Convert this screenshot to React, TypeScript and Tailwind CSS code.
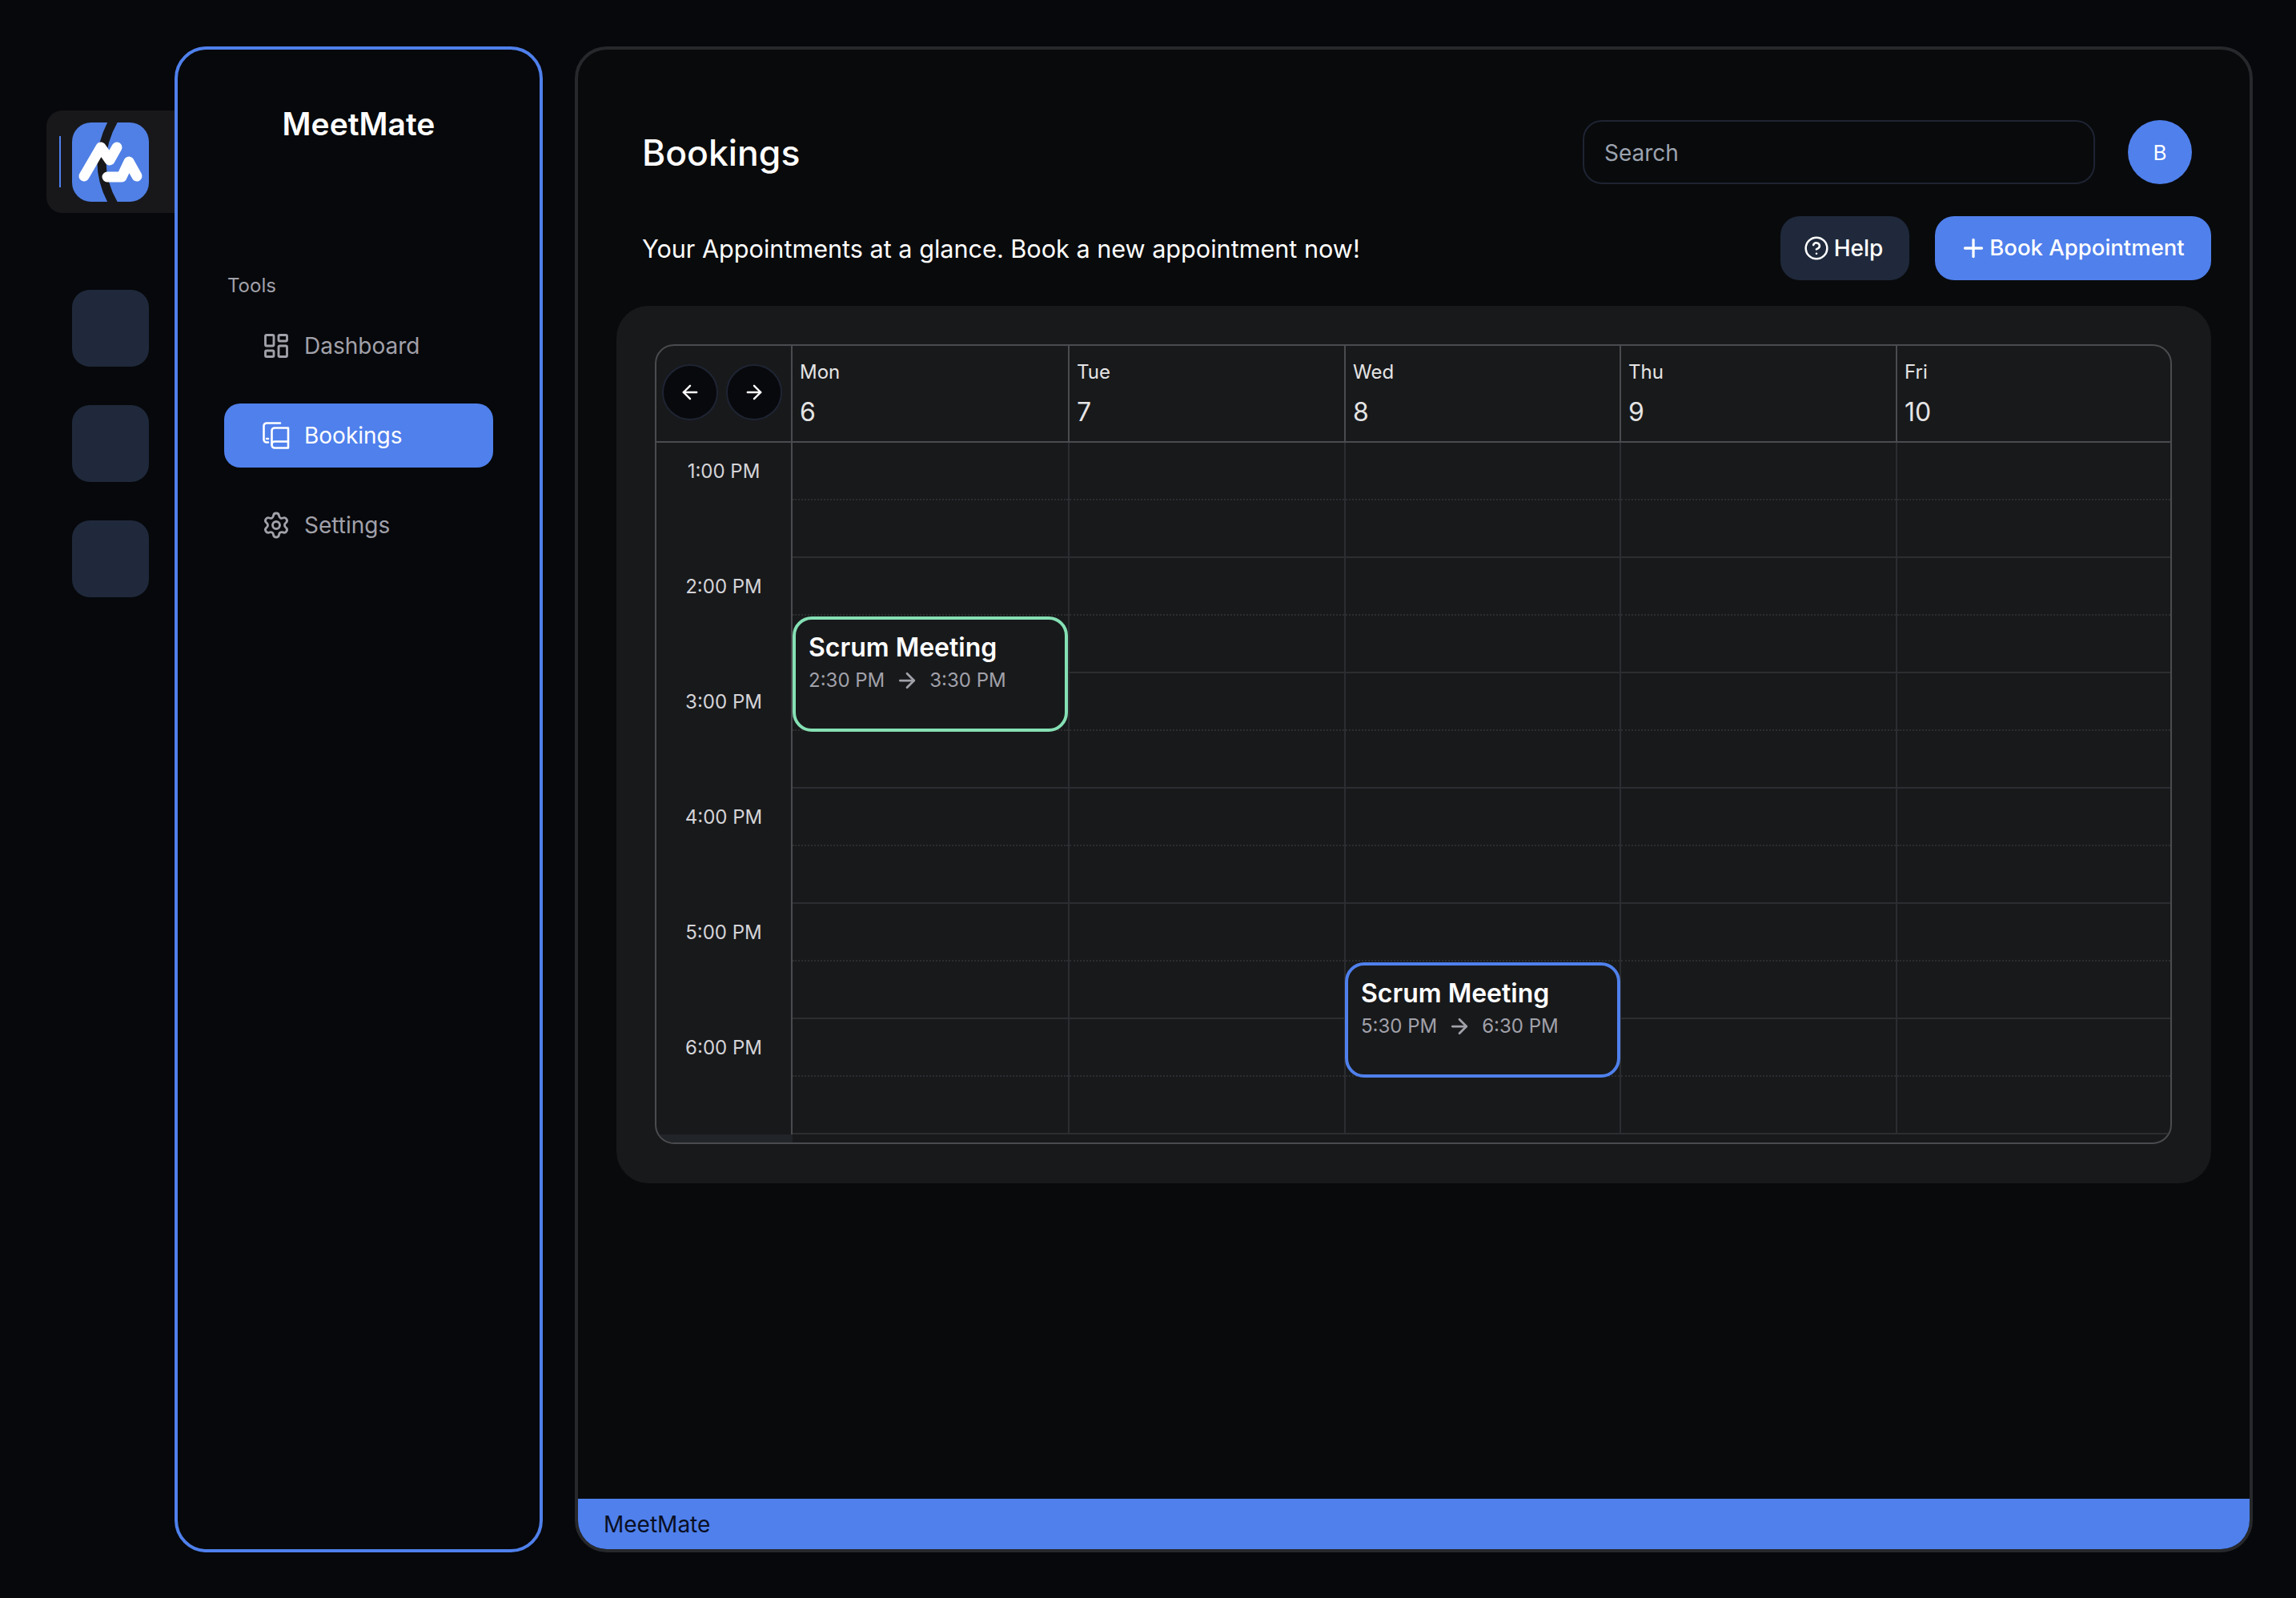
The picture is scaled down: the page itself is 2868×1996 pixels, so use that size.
import { ArrowLeft, ArrowRight, CircleHelp, LayoutDashboard, Plus, Settings } from "lucide-react";

const days = [
  ["Mon", "6", "w-[346px]"],
  ["Tue", "7", "w-[345px]"],
  ["Wed", "8", "w-[344px]"],
  ["Thu", "9", "w-[345px]"],
  ["Fri", "10", "w-[343px]"],
];
const times = ["1:00 PM", "2:00 PM", "3:00 PM", "4:00 PM", "5:00 PM", "6:00 PM"];

function Logo() {
  return (
    <svg viewBox="0 0 96 99" className="w-[96px] h-[99px] block">
      <rect width="96" height="99" rx="24" fill="#5080e6" />
      <path d="M52 -3 Q22 50 52 102" stroke="#18181b" strokeWidth="11" fill="none" />
      <path d="M15 67 L36 31 L47 47 L56 31" stroke="#fff" strokeWidth="13" fill="none" strokeLinecap="round" strokeLinejoin="round" />
      <path d="M44 68 L62 68 L71 49 L81 67" stroke="#fff" strokeWidth="13" fill="none" strokeLinecap="round" strokeLinejoin="round" />
    </svg>
  );
}

function BooksIcon() {
  return (
    <svg viewBox="0 0 34 34" className="w-[34px] h-[34px] shrink-0" fill="none" stroke="#fff" strokeWidth="2.6" strokeLinecap="round" strokeLinejoin="round">
      <path d="M22 1.500H5A3.500 3.500 0 0 0 1.500 5V22A3.500 3.500 0 0 0 5 25.500H7" />
      <path d="M5 21H7" />
      <path d="M15 7.500H32V32.500H15A3.500 3.500 0 0 1 11.500 29V11A3.500 3.500 0 0 1 15 7.500Z" />
      <path d="M11.500 28A3.500 3.500 0 0 1 15 24.500H32" />
    </svg>
  );
}

function NavItem({ icon, label, active }: { icon: React.ReactNode; label: string; active?: boolean }) {
  return (
    <div className={`flex items-center h-[80px] w-[336px] rounded-[20px] pl-[48px] gap-[18px] text-[28px] ${active ? "bg-[#4f80ec] text-white" : "text-[#a1a1aa]"}`}>
      <span className="w-[34px] flex justify-center">{icon}</span>
      <span>{label}</span>
    </div>
  );
}

function EventCard({ border, left, from, to }: { border: string; left: string; from: string; to: string }) {
  return (
    <div className={`absolute top-[1px] w-[344px] h-[144px] rounded-[24px] border-4 bg-[#18191b] pl-[16px] pt-[16px] z-10 ${left} ${border}`}>
      <div className="text-[32px] leading-[38px] font-semibold text-white">Scrum Meeting</div>
      <div className="flex items-center text-[24px] leading-[32px] mt-[6px] text-[#a1a1aa]">
        <span>{from}</span>
        <ArrowRight size={30} strokeWidth={2.2} className="mx-[13px] shrink-0" />
        <span>{to}</span>
      </div>
    </div>
  );
}

export default function App() {
  return (
    <div className="w-[2868px] h-[1996px] bg-[#07080b] flex pt-[58px] pb-[57px] font-['Inter',sans-serif] overflow-hidden">
      <div className="w-[218px] pl-[58px] pt-[80px] shrink-0 flex flex-col">
        <div className="h-[128px] w-[160px] bg-[#18181b] rounded-l-[20px] flex items-center pl-[16px]">
          <div className="w-[2px] h-[64px] bg-[#4f80ec] mr-[14px]"></div>
          <Logo />
        </div>
        <div className="ml-[32px] mt-[96px] flex flex-col gap-[48px]">
          <div className="w-[96px] h-[96px] rounded-[22px] bg-[#1f293b]"></div>
          <div className="w-[96px] h-[96px] rounded-[22px] bg-[#1f293b]"></div>
          <div className="w-[96px] h-[96px] rounded-[22px] bg-[#1f293b]"></div>
        </div>
      </div>

      <aside className="w-[460px] shrink-0 border-4 border-[#4f80ec] rounded-[40px] bg-[#07080b] flex flex-col items-center">
        <h1 className="text-[39px] leading-[48px] font-semibold text-white mt-[69px]">MeetMate</h1>
        <div className="w-[336px] mt-[162px]">
          <div className="text-[24px] leading-[32px] text-[#a1a1aa] pl-[4px]">Tools</div>
          <div className="flex flex-col gap-[32px] mt-[19px]">
            <NavItem icon={<LayoutDashboard size={36} strokeWidth={1.9} className="shrink-0" />} label="Dashboard" />
            <NavItem icon={<BooksIcon />} label="Bookings" active />
            <NavItem icon={<Settings size={36} strokeWidth={1.9} className="shrink-0" />} label="Settings" />
          </div>
        </div>
      </aside>

      <main className="ml-[40px] w-[2096px] shrink-0 border-4 border-[#27282b] rounded-[40px] bg-[#090a0c] flex flex-col overflow-hidden">
        <div className="flex items-center h-[80px] mt-[88px] pl-[80px]">
          <h2 className="text-[44.500px] leading-[56px] font-medium text-white flex-1 pt-[2px]">Bookings</h2>
          <div className="w-[640px] h-[80px] rounded-[24px] border-2 border-[#1e2433] flex items-center pl-[25px] pt-[1px] text-[28px] text-[#9ca3af]">Search</div>
          <div className="w-[80px] h-[80px] rounded-full bg-[#4f80ec] text-white text-[26px] flex items-center justify-center ml-[41px] mr-[72px]">B</div>
        </div>
        <div className="flex items-center h-[80px] mt-[40px] pl-[80px]">
          <p className="text-[30.600px] text-white flex-1 pt-[2px]">Your Appointments at a glance. Book a new appointment now!</p>
          <button className="w-[161px] h-[80px] rounded-[24px] bg-[#1f293b] text-white text-[28px] font-medium flex items-center justify-center gap-[6px] pr-[4px]">
            <CircleHelp size={32} strokeWidth={1.9} className="shrink-0" />Help
          </button>
          <button className="w-[345px] h-[80px] rounded-[24px] bg-[#4f80ec] text-white text-[27.500px] font-medium flex items-center justify-center gap-[2px] pr-[3px] ml-[32px] mr-[48px]">
            <Plus size={36} strokeWidth={2.2} className="shrink-0" />Book Appointment
          </button>
        </div>
        <section className="ml-[48px] mt-[32px] w-[1992px] h-[1096px] rounded-[40px] bg-[#18191b] pt-[48px] pl-[48px]">
          <div className="w-[1895px] h-[999px] rounded-[24px] border-2 border-[#4a4b4e] overflow-hidden">
            <div className="flex h-[121px] border-b-2 border-[#4a4b4e]">
              <div className="w-[168px] shrink-0 flex items-center pl-[7px] gap-[10px] pb-[3px]">
                <div className="w-[70px] h-[70px] rounded-full bg-[#08090c] border-2 border-[#1e2433] flex items-center justify-center text-white"><ArrowLeft size={28} strokeWidth={2.1} /></div>
                <div className="w-[70px] h-[70px] rounded-full bg-[#08090c] border-2 border-[#1e2433] flex items-center justify-center text-white"><ArrowRight size={28} strokeWidth={2.1} /></div>
              </div>
              {days.map(([d, n, w]) => (
                <div key={d} className={`${w} shrink-0 border-l-2 border-[#4a4b4e] pl-[9px] pt-[17px] text-[#e5e5e5]`}>
                  <div className="text-[24px] leading-[32px]">{d}</div>
                  <div className="text-[32px] leading-[40px] mt-[14px]">{n}</div>
                </div>
              ))}
            </div>
            <div className="flex h-[864px]">
              <div className="w-[168px] shrink-0">
                {times.map((t) => (
                  <div key={t} className="h-[144px] text-[24px] leading-[32px] pt-[20px] text-center text-[#d4d4d8]">{t}</div>
                ))}
              </div>
              {days.map(([d, , w], i) => (
                <div key={d} className={`${w} shrink-0 border-l-2 ${i === 0 ? "border-[#4a4b4e]" : "border-[#2c2d30]"}`}>
                  {Array.from({ length: 12 }).map((_, r) => (
                    <div key={r} className={`relative h-[72px] border-b-2 ${r % 2 === 0 ? "border-dotted border-[#2c2d30]" : "border-[#2c2d30]"}`}>
                      {i === 0 && r === 3 && <EventCard left="left-0" border="border-[#85e0b4]" from="2:30 PM" to="3:30 PM" />}
                      {i === 2 && r === 9 && <EventCard left="-left-[1px]" border="border-[#4f80ec]" from="5:30 PM" to="6:30 PM" />}
                    </div>
                  ))}
                </div>
              ))}
            </div>
            <div className="w-[170px] h-[12px] bg-[#212428]"></div>
          </div>
        </section>
        <footer className="mt-auto h-[63px] bg-[#4f80ec] flex items-center pl-[32px] text-[28px] text-[#0a0f24]">MeetMate</footer>
      </main>
    </div>
  );
}
